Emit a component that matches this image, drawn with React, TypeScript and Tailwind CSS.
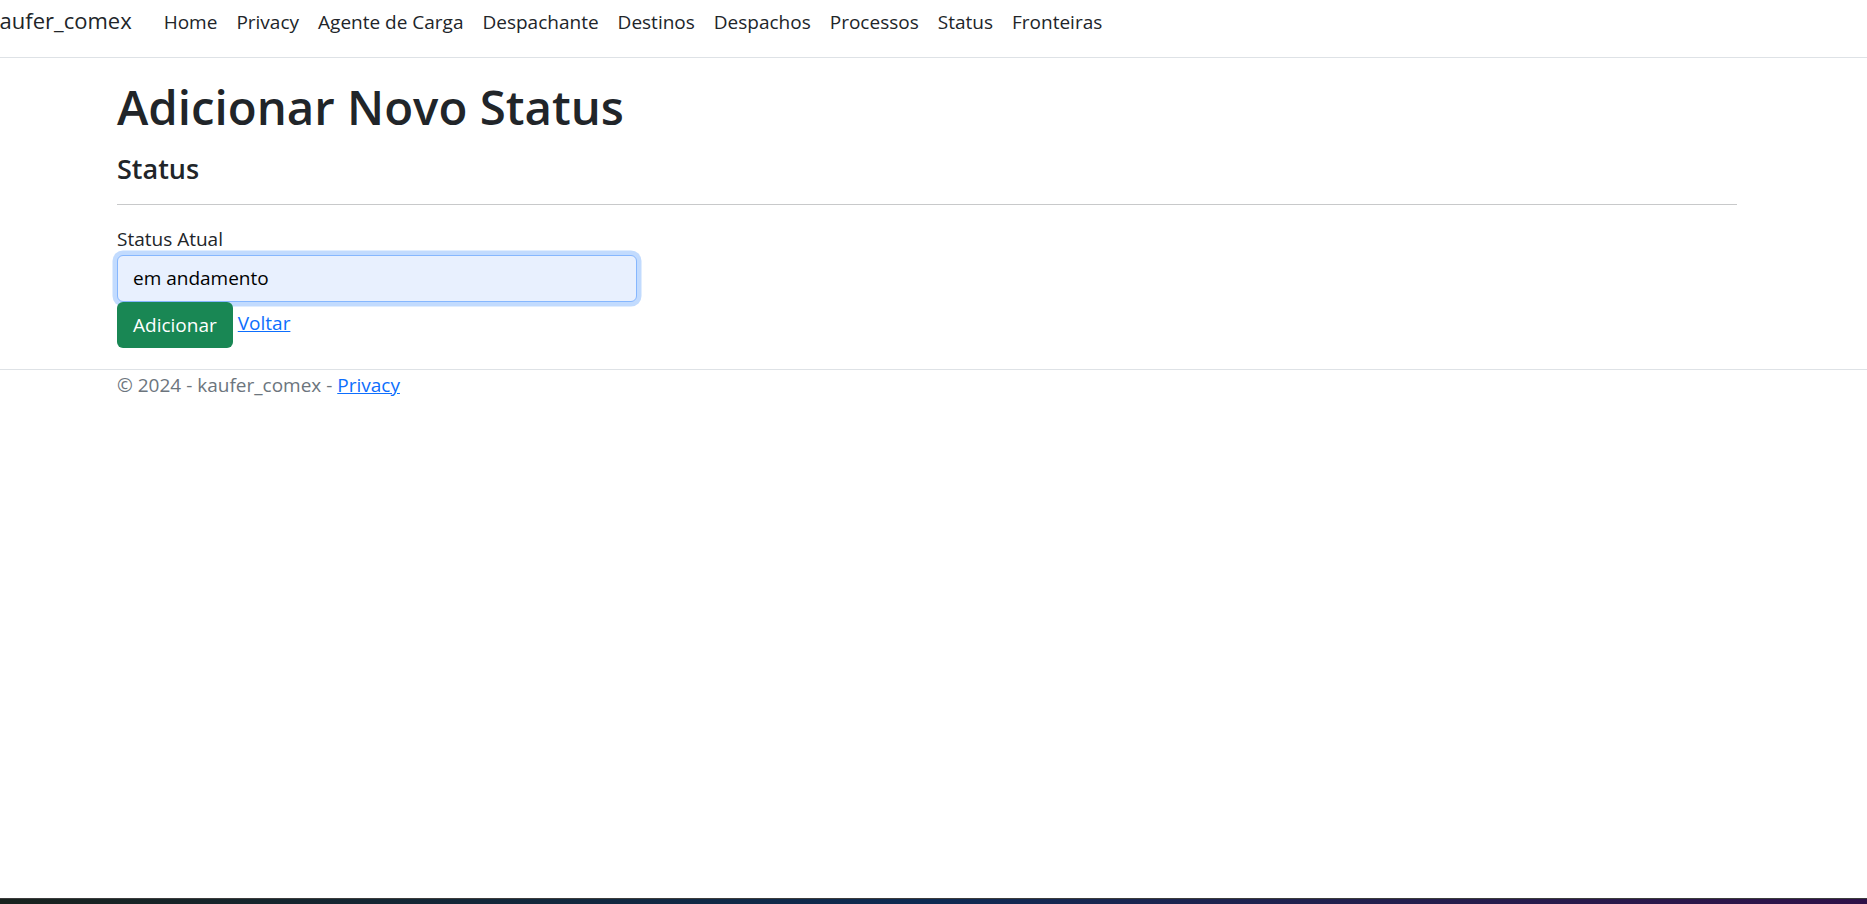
import React from "react";

const links = ["Home", "Privacy", "Agente de Carga", "Despachante", "Destinos", "Despachos", "Processos", "Status", "Fronteiras"];

const App: React.FC = () => {
  return (
    <div className="min-h-[904px] flex flex-col bg-white text-[#212529] font-['Open_Sans',sans-serif]">
      {/* Navbar */}
      <header className="h-[58px] border-b border-[#dee2e6] flex items-baseline pt-[4px]">
        <a className="ml-[-12px] text-[22px] leading-[1.5] text-[#212529] whitespace-nowrap">kaufer_comex</a>
        <ul className="flex items-baseline ml-[32px] gap-[19px]">
          {links.map((l) => (
            <li key={l}>
              <a className="text-[19px] leading-[1.5] text-[#212529] whitespace-nowrap">{l}</a>
            </li>
          ))}
        </ul>
      </header>

      {/* Main */}
      <main className="ml-[117px] w-[1620px] pt-[21px] pb-[21px]">
        <h1 className="text-[47.4px] leading-[1.2] font-semibold">Adicionar Novo Status</h1>
        <h4 className="mt-[17px] text-[27px] leading-[1.2] font-semibold">Status</h4>
        <hr className="mt-[19px] mb-[20px] border-t border-[#c8c9ca]" />

        <form className="w-[520px]">
          <label className="block text-[19px] leading-[1.5]">Status Atual</label>
          <input
            type="text"
            defaultValue="em andamento"
            className="mt-[1px] block w-[520px] h-[47px] px-[15px] text-[19px] text-[#000] bg-[#e8f0fe] border border-[#86b7fe] rounded-[6px] outline-none shadow-[0_0_0_4.5px_rgba(13,110,253,0.25)]"
          />
          <div className="flex items-start">
            <button type="button" className="h-[46px] px-[16px] bg-[#198754] text-white text-[19px] rounded-[6px]">
              Adicionar
            </button>
            <a className="ml-[5px] mt-[7px] text-[19px] leading-[1.5] text-[#0d6efd] underline">Voltar</a>
          </div>
        </form>
      </main>

      {/* Footer */}
      <footer className="border-t border-[#dee2e6]">
        <div className="ml-[117px] text-[19px] leading-[1.5] text-[#6c757d] pt-[1px]">
          © 2024 - kaufer_comex - <a className="text-[#0d6efd] underline">Privacy</a>
        </div>
      </footer>

      <div className="flex-1" />
      <div className="h-[6px] border-t border-[#3c3c3c] bg-gradient-to-r from-[#18221e] via-[#0d2a52] to-[#2e1048]" />
    </div>
  );
};

export default App;
